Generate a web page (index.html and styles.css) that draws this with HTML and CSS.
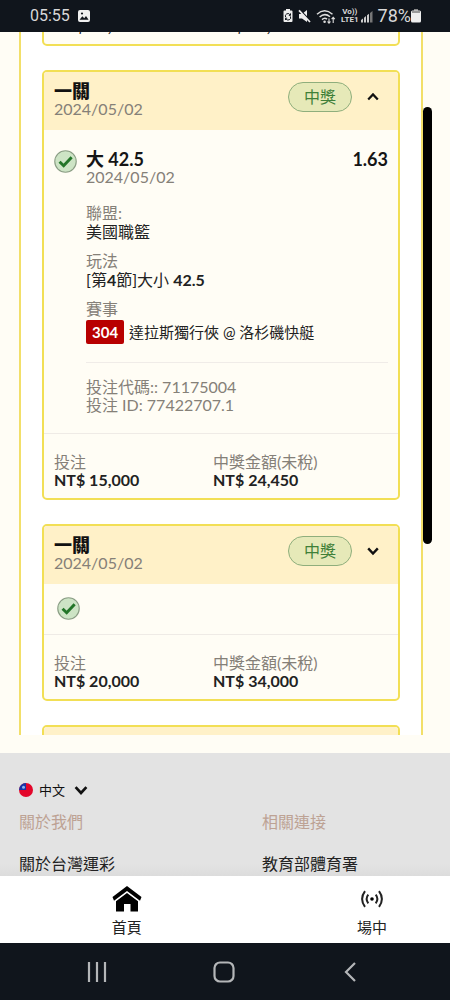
FILE: index.html
```html
<!DOCTYPE html>
<html lang="zh-Hant">
<head>
<meta charset="utf-8">
<meta name="viewport" content="width=device-width, initial-scale=1">
<title>投注紀錄</title>
<link rel="stylesheet" href="styles.css">
</head>
<body>
<svg width="0" height="0" class="defs" aria-hidden="true">
  <symbol id="check" viewBox="0 0 24 24">
    <circle cx="12" cy="12" r="11.2" fill="#cde4c5" stroke="#8c9f86" stroke-width="1.2"/>
    <path d="M5.8 12.2 10.1 16.4 18.4 7.6" fill="none" stroke="#237528" stroke-width="3.1"/>
  </symbol>
  <symbol id="down" viewBox="0 0 16 16">
    <path d="M3.2 5.4 8 10.6 12.8 5.4" fill="none" stroke="currentColor" stroke-width="2.4"/>
  </symbol>
  <symbol id="up" viewBox="0 0 16 16">
    <path d="M3.2 10.6 8 5.4 12.8 10.6" fill="none" stroke="currentColor" stroke-width="2.2"/>
  </symbol>
</svg>
<div class="screen">
  <header class="status">
    <span class="clock">05:55</span>
    <svg width="14" height="14" viewBox="0 0 14 14"><rect x="1" y="1" width="12" height="12" rx="2" fill="#f0f0f0"/><path d="M2.5 10.8 5.4 7.2 7.2 9.2 9 7 11.6 10.8Z" fill="#10151c"/><circle cx="5" cy="4.5" r="1.1" fill="#10151c"/></svg>
    <span class="status-right">
      <svg width="10" height="14" viewBox="0 0 10 14"><path d="M3 0H7V1.6H8.5Q9.5 1.6 9.5 2.6V12Q9.5 13 8.5 13H1.5Q.5 13 .5 12V2.6Q.5 1.6 1.5 1.6H3Z" fill="#eee"/><path d="M2.6 8.2A2.5 2.5 0 0 1 7.2 6M7.4 7.4A2.5 2.5 0 0 1 2.8 9.6M7.5 4.4V6.4H5.8M2.5 11V9.2H4.2" fill="none" stroke="#10151c" stroke-width="1"/></svg>
      <svg width="13" height="14" viewBox="0 0 13 14"><path d="M1 5H4L9 1V13L4 9.4H1Z" fill="#eee"/><path d="M2.200 1.200 13 12.400" stroke="#10151c" stroke-width="1.500"/><path d="M1 1.4 12 13" stroke="#eee" stroke-width="1.700"/></svg>
      <svg class="wifi" width="20" height="15" viewBox="0 0 20 15"><g fill="none" stroke="#ddd" stroke-width="1.5"><path d="M1 5.2Q8.500-1.600 16.500 5.200"/><path d="M3.600 8Q8.800 3.400 14 7.800"/><path d="M6 10.600Q8.600 8.200 11 10.200"/></g><circle cx="8.600" cy="12.700" r="1.300" fill="#ddd"/><path d="M13 9.500V14M11.500 12.500 13 14.200 14.500 12.500M17.200 14V8.500M15.600 10.200 17.200 8.300 18.800 10.200" fill="none" stroke="#ddd" stroke-width="1.100"/></svg>
      <span class="volte">Vo))<br>LTE1</span>
      <svg width="12" height="13" viewBox="0 0 12 13"><path d="M0 12.500V10L2 8.500V12.500ZM3 12.500V7.700L5 6.100V12.500ZM6 12.500V5.300L8 3.700V12.500Z" fill="#ccc"/><path d="M9 12.500V2.900L11.500 1V12.500Z" fill="#777"/></svg>
      <span class="percent">78%</span>
      <svg width="10" height="14" viewBox="0 0 10 14"><path d="M3 0H7V2H3Z" fill="#888"/><rect x="0" y="1.500" width="10" height="12" rx="1.500" fill="#eee"/><rect x="1" y="2" width="8" height="2" fill="#999"/></svg>
    </span>
  </header>

  <main class="page">
    <div class="viewport">
      <section class="list">
        <article class="card">
          <dl class="totals">
            <div><dd>NT$ 10,000</dd></div>
            <div><dd>NT$ 17,500</dd></div>
          </dl>
        </article>

        <article class="card">
          <header class="card-head">
            <div><h2>一關</h2><p class="muted">2024/05/02</p></div>
            <span class="badge">中獎</span>
            <button class="toggle" aria-label="收合"><svg width="16" height="16"><use href="#up"/></svg></button>
          </header>
          <div class="bet">
            <svg width="23" height="23"><use href="#check"/></svg>
            <div class="bet-info">
              <div class="pick"><h3>大 42.5</h3><span class="odds">1.63</span></div>
              <p class="muted">2024/05/02</p>
              <dl class="facts">
                <div><dt>聯盟:</dt><dd>美國職籃</dd></div>
                <div><dt>玩法</dt><dd>[第<b>4</b>節]大小 <b>42.5</b></dd></div>
                <div><dt>賽事</dt><dd class="match"><span class="code">304</span>達拉斯獨行俠 @ 洛杉磯快艇</dd></div>
              </dl>
              <div class="ids"><p class="muted">投注代碼:: 71175004</p><p class="muted">投注 ID: 77422707.1</p></div>
            </div>
          </div>
          <dl class="totals">
            <div><dt>投注</dt><dd>NT$ 15,000</dd></div>
            <div><dt>中獎金額(未稅)</dt><dd>NT$ 24,450</dd></div>
          </dl>
        </article>

        <article class="card">
          <header class="card-head">
            <div><h2>一關</h2><p class="muted">2024/05/02</p></div>
            <span class="badge">中獎</span>
            <button class="toggle" aria-label="展開"><svg width="16" height="16"><use href="#down"/></svg></button>
          </header>
          <div class="summary"><svg width="23" height="23"><use href="#check"/></svg></div>
          <dl class="totals">
            <div><dt>投注</dt><dd>NT$ 20,000</dd></div>
            <div><dt>中獎金額(未稅)</dt><dd>NT$ 34,000</dd></div>
          </dl>
        </article>

        <article class="card">
          <header class="card-head"></header>
        </article>
      </section>
    </div>
    <div class="scrollbar"></div>
  </main>

  <footer class="site-foot">
    <label class="language">
      <svg width="14" height="14" viewBox="0 0 14 14"><circle cx="7" cy="7" r="7" fill="#e3062a"/><path d="M7 7H0A7 7 0 0 1 7 0Z" fill="#1735a8"/><circle cx="4.500" cy="4.300" r="1.500" fill="#8cb6ee"/></svg>
      <select aria-label="語言"><option>中文</option></select>
      <svg width="18" height="18"><use href="#down"/></svg>
    </label>
    <div class="links">
      <div><h4>關於我們</h4><a href="#">關於台灣運彩</a></div>
      <div><h4>相關連接</h4><a href="#">教育部體育署</a></div>
    </div>
  </footer>

  <nav class="tabs">
    <a href="#"><svg width="30" height="28" viewBox="0 0 30 28"><path d="M15 1 29.500 12 28 15.800 15 6 2 15.800 .5 12Z"/><path d="M15 8 26 16.300V26.500H18.500V19H12V26.500H4V16.300Z"/></svg><span>首頁</span></a>
    <a href="#"><svg width="24" height="28" viewBox="0 0 24 28"><circle cx="12" cy="14" r="1.800"/><g fill="none" stroke="#222" stroke-width="2"><path d="M8.300 9.700Q4.900 14 8.300 18.300M15.700 9.700Q19.100 14 15.700 18.300M5 6.200Q-.8 14 5 21.800M19 6.200Q24.800 14 19 21.800"/></g></svg><span>場中</span></a>
  </nav>

  <nav class="system">
    <button aria-label="最近"><svg width="22" height="22" viewBox="0 0 22 22"><path d="M3 1V21M11 1V21M19 1V21"/></svg></button>
    <button aria-label="主畫面"><svg width="22" height="22" viewBox="0 0 22 22"><rect x="1.500" y="1.500" width="19" height="19" rx="5.500"/></svg></button>
    <button aria-label="返回"><svg width="22" height="22" viewBox="0 0 22 22"><path d="M15 2 6 11 15 20"/></svg></button>
  </nav>
</div>
</body>
</html>
```
FILE: styles.css
```css
* { box-sizing: border-box; }

body {
  margin: 0;
  font: 16px/18px Lato, "Noto Sans CJK TC", sans-serif;
  color: #222;
  background: #fffdf5;
}

h2, h3, h4, p, dl, dd { margin: 0; }

button, select {
  appearance: none;
  margin: 0;
  padding: 0;
  border: 0;
  background: none;
  font: inherit;
  color: inherit;
}

a { color: inherit; text-decoration: none; }
svg { display: block; flex: none; }
.defs { position: absolute; }

.screen {
  display: flex;
  flex-direction: column;
  height: 100vh;
}

/* Device status bar */
.status {
  display: flex;
  align-items: center;
  gap: 7px;
  padding: 7px 29px 7px 30px;
  background: #10151c;
  color: #d8d8d8;
  font-family: Roboto, sans-serif;
}
.status-right {
  display: flex;
  align-items: center;
  gap: 5px;
  margin-left: auto;
}
.volte { font: bold 8px/8px Roboto, sans-serif; text-align: center; }
.volte + svg { margin-left: -3px; }
.percent { font-size: 18px; }
.percent + svg { margin-left: -5px; }

/* Scrolling ticket list */
.page {
  position: relative;
  display: flex;
  flex: 1;
  min-height: 0;
  padding: 0 27px 18px 19px;
}
.viewport { flex: 1; overflow: hidden; }
.list {
  display: flex;
  flex-direction: column;
  gap: 24px;
  margin-top: -36px;
  padding: 0 21px;
  border: solid #f2df69;
  border-width: 0 2px;
  background: #fff;
}
.scrollbar {
  position: absolute;
  top: 75px;
  right: 18px;
  width: 9px;
  height: 437px;
  border-radius: 5px;
  background: #000;
}

.card {
  border: 2px solid #f2df55;
  border-radius: 5px;
  background: #fffdf5;
  overflow: hidden;
}
.card-head {
  display: flex;
  align-items: flex-start;
  gap: 12px;
  padding: 10px 10px 12px;
  background: #fff1c8;
}
.card-head > div { flex: 1; }
.card-head h2 { font-size: 18px; font-weight: 900; line-height: 18px; color: #111; }
.muted, dt { color: #858078; }
.badge {
  padding: 5px 15px;
  border: 1px solid #8fae7c;
  border-radius: 15px;
  background: #e6e9b8;
  color: #3f8038;
}
.toggle {
  display: grid;
  place-items: center;
  width: 18px;
  height: 30px;
  margin-right: 6px;
  color: #111;
}

.bet {
  display: flex;
  gap: 9px;
  padding: 20px 10px 19px;
  border-bottom: 1px solid #efebe6;
}
.bet-info { flex: 1; }
.pick {
  display: flex;
  justify-content: space-between;
  color: #151515;
}
.pick h3, .odds { font-size: 18px; font-weight: 700; line-height: 18px; }
.facts {
  display: flex;
  flex-direction: column;
  gap: 10px;
  margin-top: 18px;
}
.facts dd { line-height: 20px; }
.facts .match {
  display: flex;
  align-items: center;
  gap: 5px;
  font-size: 15px;
  line-height: 28px;
}
.code {
  padding: 0 6px;
  border-radius: 2px;
  background: #b80000;
  color: #fff;
  font-weight: 700;
  line-height: 24px;
}
.ids {
  margin-top: 16px;
  padding-top: 15px;
  border-top: 1px solid #f0ece8;
}

.summary {
  padding: 13px 13px 14px;
  border-bottom: 1px solid #efebe6;
}
.totals {
  display: grid;
  grid-template-columns: 10fr 11fr;
  padding: 19px 10px 9px;
}
.totals dd { font-weight: 700; }

/* Site footer */
.site-foot {
  padding: 28px 19px 3px;
  background: linear-gradient(#e3e3e3 90%, #dcdcdc);
}
.language {
  display: flex;
  align-items: center;
  gap: 6px;
  color: #111;
  font-size: 13px;
}
.links {
  display: grid;
  grid-template-columns: 59fr 41fr;
  margin-top: 14px;
}
.links h4 { margin-bottom: 24px; font-weight: 400; color: #bda294; }

/* App tabs */
.tabs {
  display: flex;
  padding: 9px 0 7px 4px;
  background: #fff;
  font-size: 15px;
  overflow: hidden;
}
.tabs a {
  display: flex;
  flex: 0 0 55%;
  flex-direction: column;
  align-items: center;
  gap: 5px;
}

/* Device navigation */
.system {
  display: flex;
  padding: 18px 36px 17px 34px;
  background: #10151c;
}
.system button { display: grid; flex: 1; place-items: center; }
.system svg { fill: none; stroke: #b4b6b8; stroke-width: 2.2; }
```
